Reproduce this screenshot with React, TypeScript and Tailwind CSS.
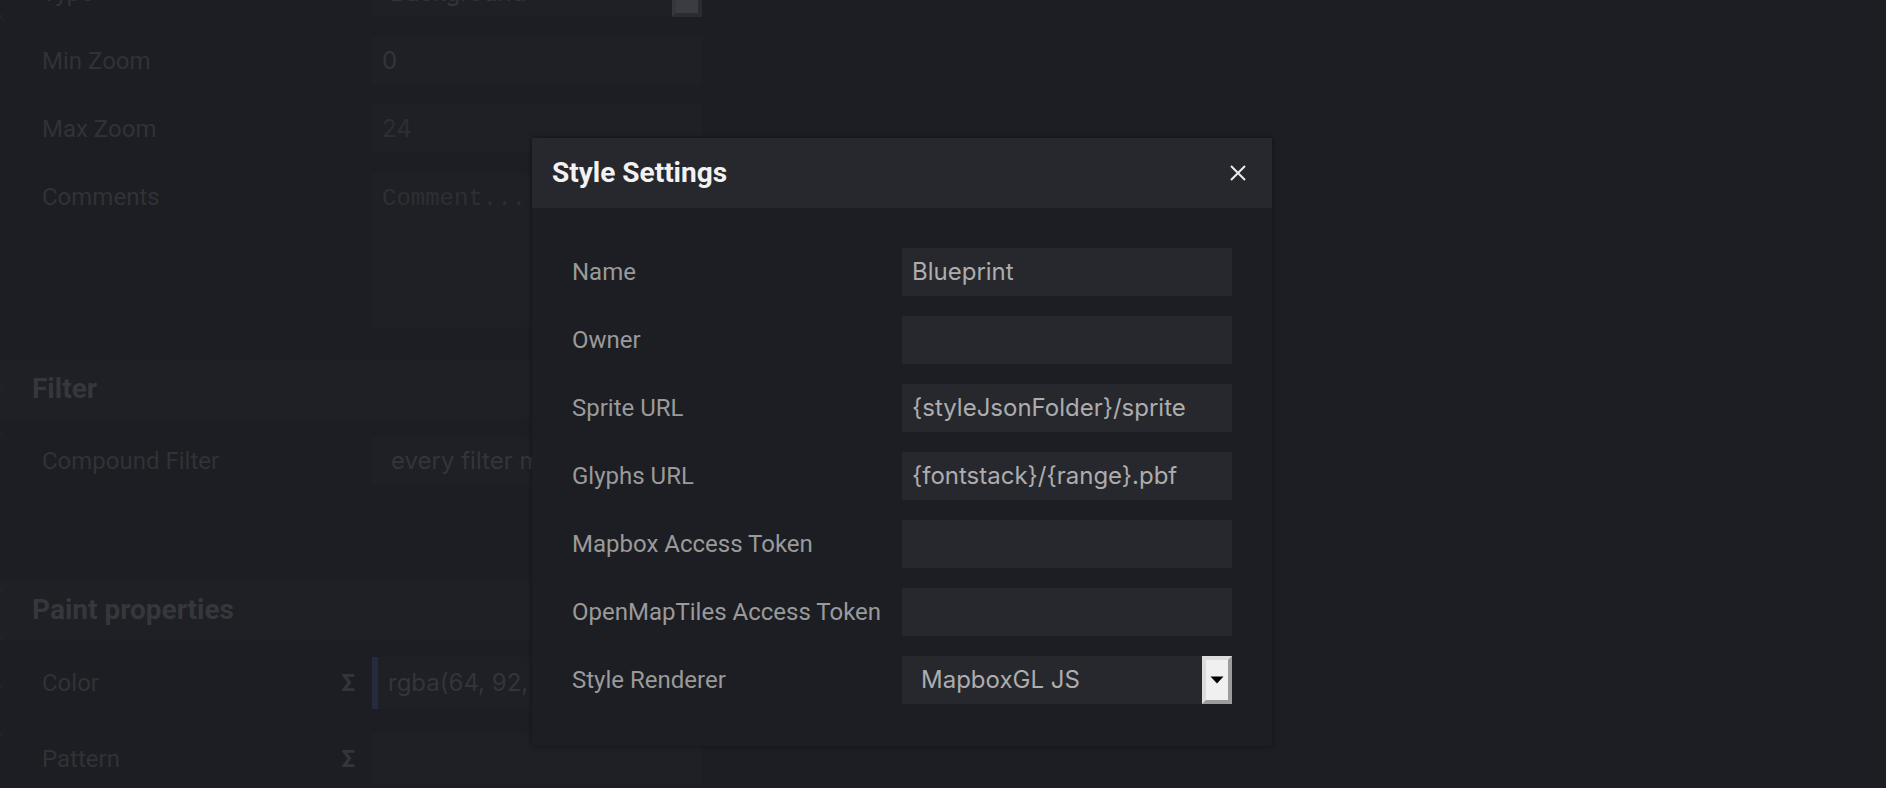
import React from "react";

const roboto = "font-['Roboto',sans-serif]";
const inter = "font-['Inter',sans-serif]";

function BgRow({
  label,
  sigma,
  children,
}: {
  label: string;
  sigma?: boolean;
  children?: React.ReactNode;
}) {
  return (
    <div className="flex items-center">
      <div
        className={`flex w-[372px] shrink-0 items-center justify-between pl-[42px] pr-[17px] text-[24px] text-[#303237] ${roboto}`}
      >
        <span>{label}</span>
        {sigma && <span className="font-bold text-[#33353a]">Σ</span>}
      </div>
      {children}
    </div>
  );
}

function ModalRow({ label, children }: { label: string; children: React.ReactNode }) {
  return (
    <>
      <div className={`flex h-[48px] items-center text-[24px] text-[#9a9a9a] ${roboto}`}>{label}</div>
      {children}
    </>
  );
}

function TextInput({ value }: { value?: string }) {
  return (
    <div
      className={`flex h-[48px] w-[330px] items-center bg-[#27282d] pl-[10px] text-[24px] text-[#adadad] ${inter}`}
    >
      {value}
    </div>
  );
}

function Chevron({ top }: { top: number }) {
  return (
    <svg
      className="absolute left-0"
      style={{ top }}
      width="4"
      height="10"
      viewBox="0 0 4 10"
    >
      <path d="M3.5 1 L0.5 5 L3.5 9" stroke="#25272c" strokeWidth="1.2" fill="none" />
    </svg>
  );
}

export default function App() {
  return (
    <div className="relative h-[788px] w-[1886px] overflow-hidden bg-[#1c1e23]">
      {/* background layer editor (dimmed) */}
      <div className="-mt-[31px] flex w-[712px] flex-col">
        <div className="flex flex-col gap-[20px]">
          <BgRow label="Type">
            <div className={`flex h-[48px] w-[330px] items-center justify-between bg-[#1e2025] pl-[18px] text-[24px] text-[#33353a] ${inter}`}>
              <span>Background</span>
              <div className="h-[48px] w-[30px] border-[4px] border-t-[#36373c] border-l-[#36373c] border-r-[#2b2c31] border-b-[#2b2c31] bg-[#3b3c41]" />
            </div>
          </BgRow>
          <BgRow label="Min Zoom">
            <div className={`flex h-[48px] w-[330px] items-center bg-[#1e2025] pl-[10px] text-[24px] text-[#33353a] ${inter}`}>0</div>
          </BgRow>
          <BgRow label="Max Zoom">
            <div className={`flex h-[48px] w-[330px] items-center bg-[#1e2025] pl-[10px] text-[24px] text-[#2c2e33] ${inter}`}>24</div>
          </BgRow>
          <div className="flex items-start">
            <div className={`w-[372px] shrink-0 pl-[42px] pt-[6px] text-[24px] text-[#303237] ${roboto}`}>Comments</div>
            <div className="h-[154px] w-[330px] bg-[#1e2025] pl-[10px] pt-[8px] font-['Liberation_Mono',monospace] text-[24px] text-[#2d2f34]">
              Comment...
            </div>
          </div>
        </div>

        <div className={`mt-[32px] flex h-[60px] items-center bg-[#1e2025] pl-[32px] text-[28px] font-bold text-[#35373c] ${roboto}`}>
          Filter
        </div>
        <div className="mt-[18px]">
          <BgRow label="Compound Filter">
            <div className={`flex h-[48px] w-[330px] items-center bg-[#1e2025] pl-[19px] text-[24px] text-[#33353a] ${inter}`}>
              every filter matches
            </div>
          </BgRow>
        </div>

        <div className={`mt-[95px] flex h-[60px] items-center bg-[#1e2025] pl-[32px] text-[28px] font-bold text-[#35373c] ${roboto}`}>
          Paint properties
        </div>
        <div className="mt-[17px] flex flex-col gap-[24px]">
          <BgRow label="Color" sigma>
            <div className={`flex h-[52px] w-[330px] items-center bg-[#1e2025] text-[24px] text-[#33353a] ${inter}`}>
              <div className="h-full w-[6px] bg-[#252c40]" />
              <span className="pl-[10px]">rgba(64, 92, 176, 1)</span>
            </div>
          </BgRow>
          <BgRow label="Pattern" sigma>
            <div className="h-[52px] w-[330px] bg-[#1e2025]" />
          </BgRow>
        </div>
      </div>

      <Chevron top={12} />
      <Chevron top={382} />
      <Chevron top={430} />
      <Chevron top={585} />
      <Chevron top={633} />
      <Chevron top={681} />
      <Chevron top={729} />

      {/* modal */}
      <div className="absolute left-[532px] top-[138px] w-[740px] bg-[#1c1e23] shadow-[0_0_5px_rgba(0,0,0,0.45)]">
        <div className="flex h-[70px] items-center justify-between bg-[#27282d] pl-[20px] pr-[25px]">
          <h1 className={`text-[28px] font-bold text-[#f2f2f2] ${roboto}`}>Style Settings</h1>
          <button className="flex h-[18px] w-[18px] items-center justify-center">
            <svg width="18" height="18" viewBox="0 0 18 18">
              <path d="M2 2 L16 16 M16 2 L2 16" stroke="#ececec" strokeWidth="2" />
            </svg>
          </button>
        </div>
        <div className="grid grid-cols-[330px_330px] gap-y-[20px] px-[40px] pb-[42px] pt-[40px]">
          <ModalRow label="Name">
            <TextInput value="Blueprint" />
          </ModalRow>
          <ModalRow label="Owner">
            <TextInput />
          </ModalRow>
          <ModalRow label="Sprite URL">
            <TextInput value="{styleJsonFolder}/sprite" />
          </ModalRow>
          <ModalRow label="Glyphs URL">
            <TextInput value="{fontstack}/{range}.pbf" />
          </ModalRow>
          <ModalRow label="Mapbox Access Token">
            <TextInput />
          </ModalRow>
          <ModalRow label="OpenMapTiles Access Token">
            <TextInput />
          </ModalRow>
          <ModalRow label="Style Renderer">
            <div
              className={`flex h-[48px] w-[330px] items-center justify-between bg-[#27282d] pl-[19px] text-[24px] text-[#adadad] ${inter}`}
            >
              <span>MapboxGL JS</span>
              <div className="flex h-[48px] w-[30px] items-center justify-center border-[4px] border-t-[#dcdcdc] border-l-[#dcdcdc] border-r-[#9c9c9c] border-b-[#9c9c9c] bg-[#f0f0f0]">
                <svg width="14" height="8" viewBox="0 0 14 8">
                  <path d="M0.5 0.5 H13.5 L7 7.5 Z" fill="#000" />
                </svg>
              </div>
            </div>
          </ModalRow>
        </div>
      </div>
    </div>
  );
}
